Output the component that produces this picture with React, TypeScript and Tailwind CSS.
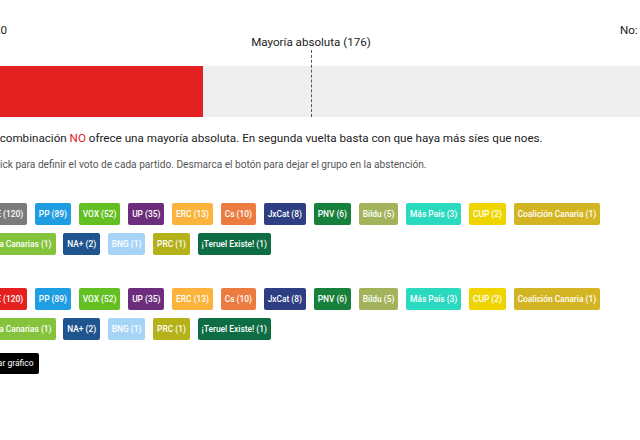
import React from 'react';

type Party = { name: string; seats: number; color: string };

const parties: Party[] = [
  { name: 'PSOE', seats: 120, color: 'bg-[#e3201d]' },
  { name: 'PP', seats: 89, color: 'bg-[#1f9de2]' },
  { name: 'VOX', seats: 52, color: 'bg-[#64bf22]' },
  { name: 'UP', seats: 35, color: 'bg-[#6c2d7c]' },
  { name: 'ERC', seats: 13, color: 'bg-[#fbb33c]' },
  { name: 'Cs', seats: 10, color: 'bg-[#ec7b40]' },
  { name: 'JxCat', seats: 8, color: 'bg-[#2d3f82]' },
  { name: 'PNV', seats: 6, color: 'bg-[#17803b]' },
  { name: 'Bildu', seats: 5, color: 'bg-[#a2b35b]' },
  { name: 'Más País', seats: 3, color: 'bg-[#2ad9c0]' },
  { name: 'CUP', seats: 2, color: 'bg-[#f0d400]' },
  { name: 'Coalición Canaria', seats: 1, color: 'bg-[#d3b524]' },
  { name: 'Nueva Canarias', seats: 1, color: 'bg-[#86c33d]' },
  { name: 'NA+', seats: 2, color: 'bg-[#1f548f]' },
  { name: 'BNG', seats: 1, color: 'bg-[#a6d4f6]' },
  { name: 'PRC', seats: 1, color: 'bg-[#b4b119]' },
  { name: '¡Teruel Existe!', seats: 1, color: 'bg-[#0f6d43]' },
];

const PartyButtons: React.FC<{ firstGray?: boolean }> = ({ firstGray }) => (
  <div className="flex flex-wrap gap-x-[7.7px] gap-y-[8px] w-[660px]">
    {parties.map((p, i) => (
      <button
        key={p.name}
        className={`h-[22px] px-[4px] rounded-[2px] text-white text-[8.4px] font-medium leading-none ${
          i === 0 && firstGray ? 'bg-[#7b7b7b]' : p.color
        }`}
      >
        {p.name} ({p.seats})
      </button>
    ))}
  </div>
);

export default function App() {
  return (
    <div className="w-[640px] h-[440px] overflow-hidden bg-white font-['Roboto',sans-serif] text-[#222]">
      <div className="ml-[-28px] w-[700px] pt-[23px]">
        {/* bar chart */}
        <div className="w-[675px]">
          <div className="relative h-[43px]">
            <div className="flex justify-between text-[11.6px] leading-[15px]">
              <span>Sí: 120</span>
              <span>No: 0</span>
            </div>
            <div className="absolute left-[339px] top-[12px] -translate-x-1/2 whitespace-nowrap text-[11.6px] leading-[15px]">
              Mayoría absoluta (176)
            </div>
            <div className="absolute left-[339px] top-[27px] h-[67px] border-l border-dashed border-[#555] z-10" />
          </div>
          <div className="h-[51px] bg-[#efefef] flex">
            <div className="h-full w-[231px] bg-[#e1201f]" />
          </div>
        </div>

        <div className="ml-[2px]">
          <p className="mt-[13px] text-[11.65px] leading-[17px] whitespace-nowrap">
            Esta combinación <span className="text-[#e3201d]">NO</span> ofrece una mayoría absoluta. En segunda vuelta basta con que haya más síes que noes.
          </p>
          <p className="mt-[11px] ml-[-2px] text-[10.15px] leading-[13px] text-[#555] whitespace-nowrap">
            Haz click para definir el voto de cada partido. Desmarca el botón para dejar el grupo en la abstención.
          </p>
        </div>

        <div className="ml-[4px]">
          <div className="mt-[32px]">
            <PartyButtons firstGray />
          </div>
          <div className="mt-[33px]">
            <PartyButtons />
          </div>

          <button className="mt-[13px] ml-[-3px] h-[21px] px-[5px] bg-black text-white text-[8.5px] leading-none rounded-[2px]">
            Ocultar gráfico
          </button>
        </div>
      </div>
    </div>
  );
}
